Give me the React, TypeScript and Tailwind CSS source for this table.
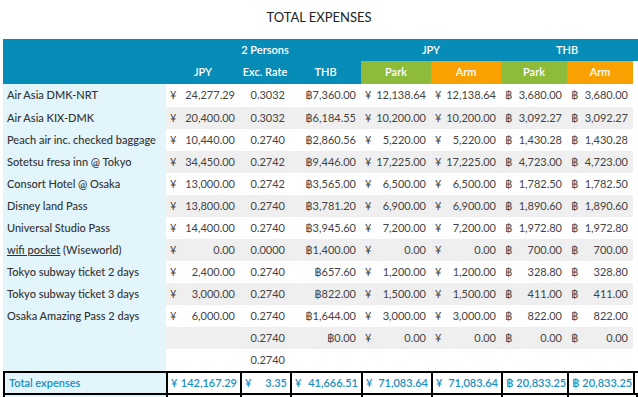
const cols = "grid grid-cols-[163px_74px_50px_71px_70px_70px_66px_66px]";

type Row = {
	label: React.ReactNode;
	jpy?: string;
	rate: string;
	thb?: string;
	park?: string;
	arm?: string;
	thbPark?: string;
	thbArm?: string;
};

const rows: Row[] = [
	{ label: "Air Asia DMK-NRT", jpy: "24,277.29", rate: "0.3032", thb: "฿7,360.00", park: "12,138.64", arm: "12,138.64", thbPark: "3,680.00", thbArm: "3,680.00" },
	{ label: "Air Asia KIX-DMK", jpy: "20,400.00", rate: "0.3032", thb: "฿6,184.55", park: "10,200.00", arm: "10,200.00", thbPark: "3,092.27", thbArm: "3,092.27" },
	{ label: "Peach air inc. checked baggage", jpy: "10,440.00", rate: "0.2740", thb: "฿2,860.56", park: "5,220.00", arm: "5,220.00", thbPark: "1,430.28", thbArm: "1,430.28" },
	{ label: "Sotetsu fresa inn @ Tokyo", jpy: "34,450.00", rate: "0.2742", thb: "฿9,446.00", park: "17,225.00", arm: "17,225.00", thbPark: "4,723.00", thbArm: "4,723.00" },
	{ label: "Consort Hotel @ Osaka", jpy: "13,000.00", rate: "0.2742", thb: "฿3,565.00", park: "6,500.00", arm: "6,500.00", thbPark: "1,782.50", thbArm: "1,782.50" },
	{ label: "Disney land Pass", jpy: "13,800.00", rate: "0.2740", thb: "฿3,781.20", park: "6,900.00", arm: "6,900.00", thbPark: "1,890.60", thbArm: "1,890.60" },
	{ label: "Universal Studio Pass", jpy: "14,400.00", rate: "0.2740", thb: "฿3,945.60", park: "7,200.00", arm: "7,200.00", thbPark: "1,972.80", thbArm: "1,972.80" },
	{
		label: (
			<span>
				<span className="underline">wifi pocket</span> (Wiseworld)
			</span>
		),
		jpy: "0.00", rate: "0.0000", thb: "฿1,400.00", park: "0.00", arm: "0.00", thbPark: "700.00", thbArm: "700.00",
	},
	{ label: "Tokyo subway ticket 2 days", jpy: "2,400.00", rate: "0.2740", thb: "฿657.60", park: "1,200.00", arm: "1,200.00", thbPark: "328.80", thbArm: "328.80" },
	{ label: "Tokyo subway ticket 3 days", jpy: "3,000.00", rate: "0.2740", thb: "฿822.00", park: "1,500.00", arm: "1,500.00", thbPark: "411.00", thbArm: "411.00" },
	{ label: "Osaka Amazing Pass 2 days", jpy: "6,000.00", rate: "0.2740", thb: "฿1,644.00", park: "3,000.00", arm: "3,000.00", thbPark: "822.00", thbArm: "822.00" },
	{ label: "", rate: "0.2740", thb: "฿0.00", park: "0.00", arm: "0.00", thbPark: "0.00", thbArm: "0.00" },
	{ label: "", rate: "0.2740" },
];

function Money({ sym, value }: { sym: string; value?: string }) {
	if (value === undefined) return <div />;
	return (
		<div className="flex justify-between items-center gap-1 pl-1 pr-[5px]">
			<span>{sym}</span>
			<span>{value}</span>
		</div>
	);
}

function TotalCell({ sym, value }: { sym: string; value: string }) {
	return (
		<div className="flex justify-between items-center gap-[3px] pl-[3px] pr-[3px] border-r-2 border-black whitespace-nowrap">
			<span>{sym}</span>
			<span>{value}</span>
		</div>
	);
}

export default function App() {
	return (
		<div className="w-[638px] bg-white font-['Lato',sans-serif] text-[11px] text-[#333]">
			<div className="h-[39px] pt-2 text-center text-[13px] text-[#222]">TOTAL EXPENSES</div>

			<div className="pl-[3px]">
				{/* header */}
				<div className={`${cols} h-[22px] items-center bg-[#078cb8] text-white font-semibold text-center`}>
					<div />
					<div />
					<div>2 Persons</div>
					<div />
					<div className="col-span-2">JPY</div>
					<div className="col-span-2">THB</div>
				</div>
				<div className={`${cols} h-[23px] text-white font-semibold text-center`}>
					<div className="bg-[#078cb8]" />
					<div className="bg-[#078cb8] flex items-center justify-center">JPY</div>
					<div className="bg-[#078cb8] flex items-center justify-center">Exc. Rate</div>
					<div className="bg-[#078cb8] flex items-center justify-center">THB</div>
					<div className="bg-[#8ebb3a] flex items-center justify-center">Park</div>
					<div className="bg-[#f9a100] flex items-center justify-center">Arm</div>
					<div className="bg-[#8ebb3a] flex items-center justify-center">Park</div>
					<div className="bg-[#f9a100] flex items-center justify-center">Arm</div>
				</div>

				{/* body */}
				{rows.map((r, i) => (
					<div key={i} className={`${cols} ${i === 0 ? "h-[23px]" : "h-[22px]"}`}>
						<div className="bg-[#e1f5fb] flex items-center pl-1 font-medium text-[#333]">{r.label}</div>
						<div className={`col-span-7 grid grid-cols-[74px_50px_71px_70px_70px_66px_66px] items-center text-[#444] ${i % 2 === 1 ? "bg-[#efefef]" : "bg-white"}`}>
							<Money sym="¥" value={r.jpy} />
							<div className="text-right pr-[5px]">{r.rate}</div>
							<div className="text-right pr-[5px]">{r.thb}</div>
							<Money sym="¥" value={r.park} />
							<Money sym="¥" value={r.arm} />
							<Money sym="฿" value={r.thbPark} />
							<Money sym="฿" value={r.thbArm} />
						</div>
					</div>
				))}

				{/* total */}
				<div className={`${cols} h-[24px] border-2 border-r-0 border-black text-[#1a8fc0] font-semibold`}>
					<div className="bg-[#e1f5fb] flex items-center pl-1 border-r-2 border-black">Total expenses</div>
					<TotalCell sym="¥" value="142,167.29" />
					<TotalCell sym="¥" value="3.35" />
					<TotalCell sym="¥" value="41,666.51" />
					<TotalCell sym="¥" value="71,083.64" />
					<TotalCell sym="¥" value="71,083.64" />
					<TotalCell sym="฿" value="20,833.25" />
					<TotalCell sym="฿" value="20,833.25" />
				</div>
				<div className={`${cols} h-[24px] border-x-2 border-b-2 border-black`}>
					<div className="bg-[#e1f5fb] border-r-2 border-black" />
					<div className="border-r-2 border-black" />
					<div className="border-r-2 border-black" />
					<div className="border-r-2 border-black" />
					<div className="border-r-2 border-black" />
					<div className="border-r-2 border-black" />
					<div className="border-r-2 border-black" />
					<div />
				</div>
			</div>
		</div>
	);
}
